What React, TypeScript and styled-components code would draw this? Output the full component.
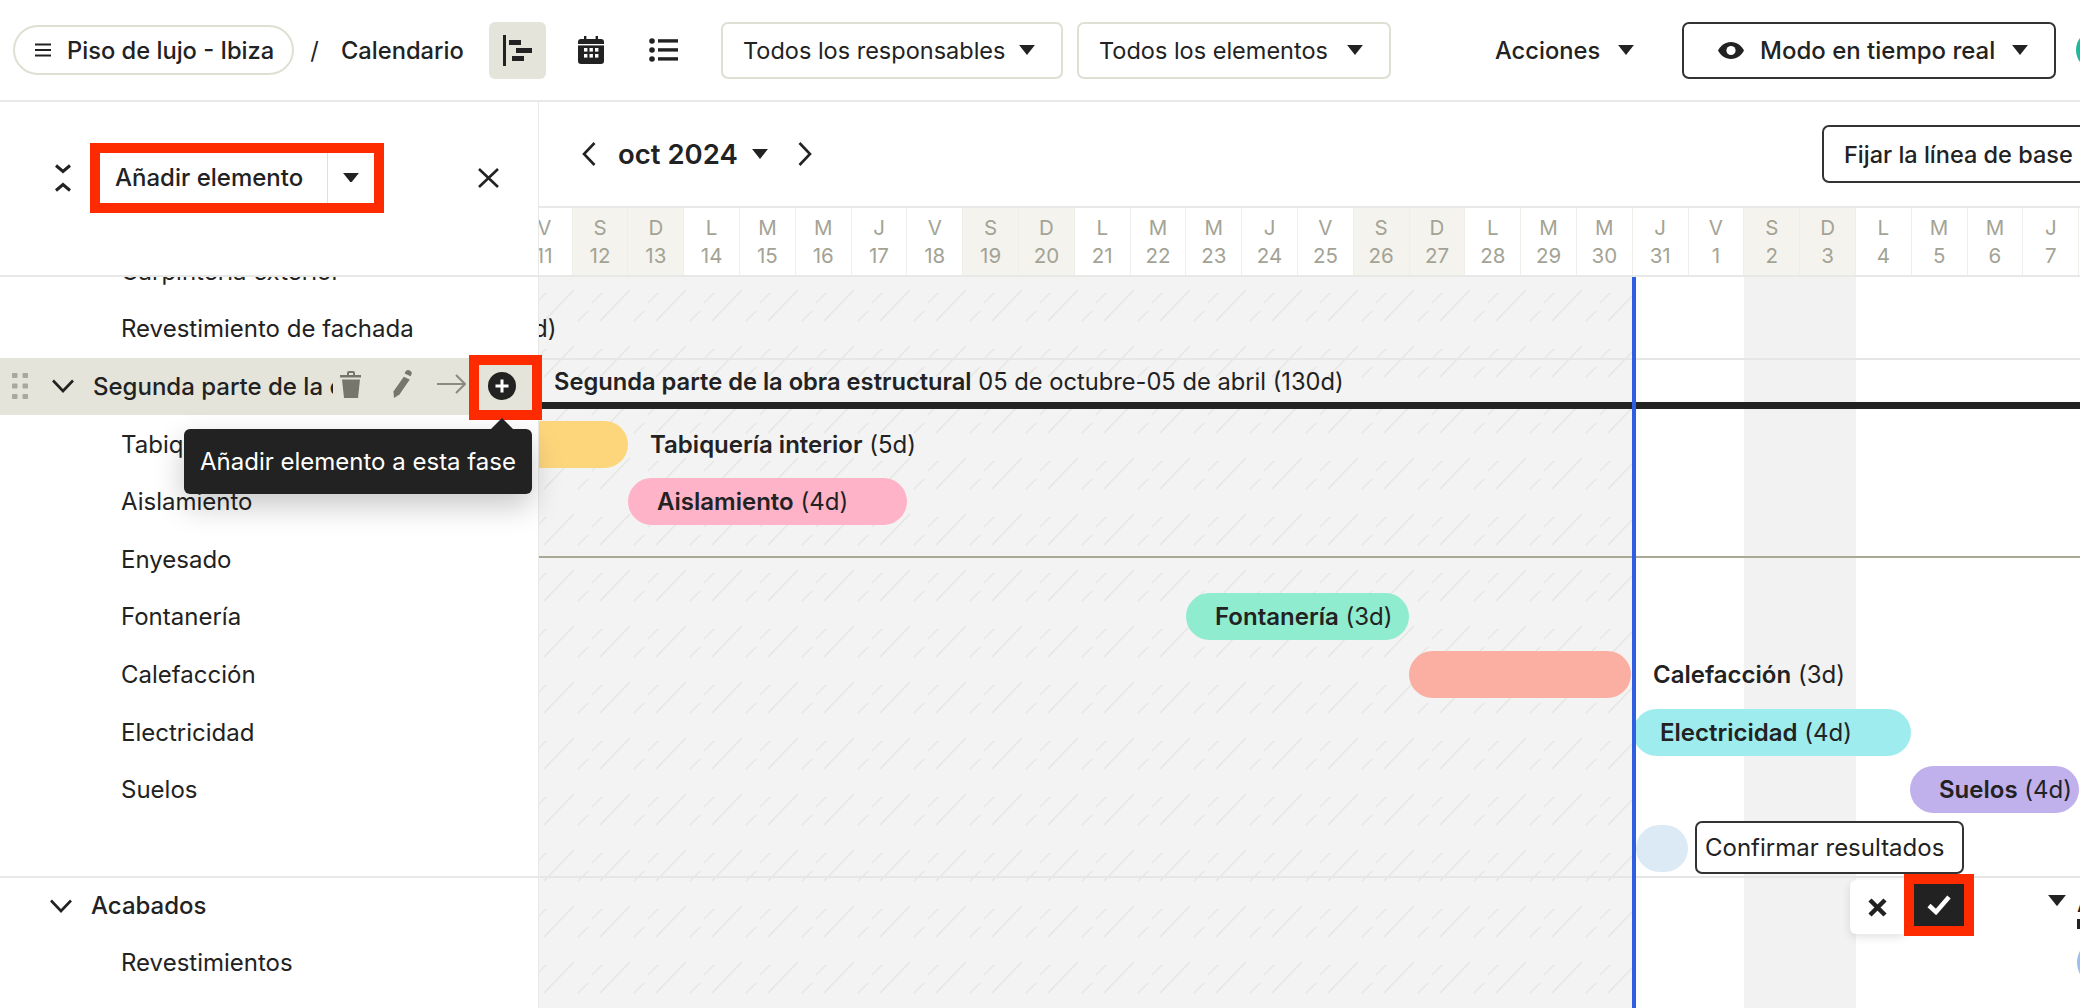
import React from 'react';
import styled, { createGlobalStyle } from 'styled-components';

const INK = '#222222';
const RED = '#ff2b00';
const DAY_W = 55.8;
const ROW_H = 57.6;

const hatch = encodeURIComponent(
  `<svg xmlns="http://www.w3.org/2000/svg" width="56" height="56"><g stroke="#e4e4e2" stroke-width="1.2" fill="none"><path d="M6 44L36 13"/><path d="M40 44L50 34"/><path d="M-2 26L8 16"/><path d="M54 26L64 16"/></g></svg>`,
);

const GlobalStyle = createGlobalStyle`
  html, body {
    margin: 0;
    padding: 0;
    background: #fff;
    font-family: 'Inter', 'Liberation Sans', sans-serif;
    font-size: 24px;
    color: ${INK};
  }
  * { box-sizing: border-box; }
`;

const Page = styled.div`
  width: 2080px;
  height: 1008px;
  overflow: hidden;
  display: flex;
  flex-direction: column;
`;

/* top bar */
const TopBar = styled.header`
  height: 102px;
  flex: none;
  display: flex;
  align-items: center;
  padding: 0 0 0 13px;
  border-bottom: 2px solid #e8e8e6;
  font-size: 23.7px;
  font-weight: 500;
`;
const ProjectPill = styled.div`
  width: 281px;
  height: 50px;
  flex: none;
  display: flex;
  align-items: center;
  gap: 16px;
  padding-left: 20px;
  white-space: nowrap;
  border: 2px solid #e0dfd3;
  border-radius: 25px;
`;
const Slash = styled.span`
  width: 47px;
  flex: none;
  padding-right: 6px;
  text-align: center;
  font-weight: 400;
`;
const Crumb = styled.span`
  width: 148px;
  flex: none;
`;
const ViewButton = styled.div<{ $active?: boolean }>`
  width: 57px;
  height: 57px;
  flex: none;
  margin-right: 16px;
  display: flex;
  align-items: center;
  justify-content: center;
  border-radius: 6px;
  background: ${(p) => (p.$active ? '#e5e4da' : 'transparent')};
`;
const FilterButton = styled.div<{ $w: number; $ml: number; $dark?: boolean }>`
  width: ${(p) => p.$w}px;
  height: 57px;
  flex: none;
  margin-left: ${(p) => p.$ml}px;
  display: flex;
  align-items: center;
  justify-content: space-between;
  padding: 0 26px 0 20px;
  border: 2px solid ${(p) => (p.$dark ? '#333' : '#e0dfd3')};
  border-radius: 7px;
  font-size: ${(p) => (p.$dark ? 24 : 23.5)}px;
  font-weight: ${(p) => (p.$dark ? 500 : 400)};
`;
const ActionsMenu = styled.div`
  width: 139px;
  margin-left: 104px;
  flex: none;
  display: flex;
  align-items: center;
  justify-content: space-between;
`;
const EyeLabel = styled.span`
  display: flex;
  align-items: center;
  gap: 16px;
  margin-left: 14px;
`;
const Avatar = styled.div`
  width: 40px;
  height: 40px;
  flex: none;
  margin-left: 20px;
  border-radius: 50%;
  background: #1fb89a;
`;

/* body */
const Body = styled.div`
  flex: 1;
  display: flex;
  min-height: 0;
`;
const Sidebar = styled.aside`
  width: 539px;
  flex: none;
  position: relative;
  z-index: 3;
  background: #fff;
  border-right: 1px solid #e8e8e6;
`;
const SideHead = styled.div`
  position: relative;
  z-index: 2;
  height: 175px;
  display: flex;
  align-items: center;
  padding-left: 55px;
  padding-bottom: 22px;
  background: #fff;
  border-bottom: 2px solid #e8e8e6;
`;
const AddWrap = styled.div`
  width: 294px;
  height: 70px;
  margin-left: 19px;
  flex: none;
  display: flex;
  align-items: stretch;
  border: 10px solid ${RED};
  font-weight: 500;
`;
const AddLabel = styled.div`
  flex: 1;
  display: flex;
  align-items: center;
  padding-left: 15px;
  white-space: nowrap;
  border-right: 1px solid #e0dfd3;
`;
const AddCaret = styled.div`
  width: 46px;
  flex: none;
  display: flex;
  align-items: center;
  justify-content: center;
`;
const CloseBtn = styled.div`
  margin-left: 94px;
  display: flex;
`;
const TaskList = styled.div`
  margin-top: -34.5px;
`;
const TaskRow = styled.div<{ $rule?: boolean }>`
  height: ${ROW_H}px;
  display: flex;
  align-items: center;
  padding-left: 121px;
  border-top: ${(p) => (p.$rule ? '2px solid #e8e8e6' : 'none')};
`;
const PhaseRow = styled.div<{ $hover?: boolean; $rule?: boolean }>`
  position: relative;
  height: ${ROW_H}px;
  display: flex;
  align-items: center;
  padding-left: ${(p) => (p.$hover ? 12 : 50)}px;
  font-weight: 500;
  background: ${(p) => (p.$hover ? '#e5e4da' : 'transparent')};
  border-top: ${(p) => (p.$rule ? '2px solid #e8e8e6' : 'none')};
`;
const RowChevron = styled.span`
  display: flex;
  flex: none;
  margin-left: 24px;
`;
const PhaseName = styled.span`
  width: 240px;
  flex: none;
  margin-left: 19px;
  white-space: nowrap;
  overflow: hidden;
`;
const RowTools = styled.div`
  display: flex;
  align-items: center;
  margin-top: -4px;
  margin-left: 7px;
`;
const ToolSlot = styled.span<{ $w: number }>`
  width: ${(p) => p.$w}px;
  flex: none;
  display: flex;
  justify-content: center;
`;
const ArrowSlot = styled(ToolSlot)`
  margin-left: -5px;
`;
const PlusMark = styled.div`
  position: absolute;
  left: 469px;
  top: -3px;
  width: 73px;
  height: 65px;
  display: flex;
  align-items: center;
  justify-content: center;
  padding: 0 7px 3px 0;
  border: 10px solid ${RED};
`;
const Tooltip = styled.div`
  position: absolute;
  left: 184px;
  top: 71px;
  width: 348px;
  height: 65px;
  display: flex;
  align-items: center;
  justify-content: center;
  white-space: nowrap;
  background: ${INK};
  color: #fff;
  font-weight: 400;
  border-radius: 6px;
  box-shadow: 0 12px 30px rgba(0, 0, 0, 0.22);
  &::before {
    content: '';
    position: absolute;
    left: 307px;
    top: -11px;
    border-left: 11px solid transparent;
    border-right: 11px solid transparent;
    border-bottom: 11px solid ${INK};
  }
`;

/* chart */
const Chart = styled.main`
  flex: 1;
  min-width: 0;
  margin-left: -1px;
  display: flex;
  flex-direction: column;
`;
const ChartNav = styled.div`
  height: 104px;
  flex: none;
  display: flex;
  align-items: center;
  padding-left: 44px;
`;
const MonthLabel = styled.span`
  margin-left: 22px;
  font-size: 27.5px;
  font-weight: 600;
`;
const NavCaret = styled.span`
  display: flex;
  margin-left: 14px;
`;
const NavNext = styled.span`
  display: flex;
  margin-left: 30px;
`;
const BaselineButton = styled.div`
  width: 300px;
  height: 58px;
  flex: none;
  margin-left: auto;
  margin-right: -43px;
  transform: translateX(-1px);
  display: flex;
  align-items: center;
  padding-left: 20px;
  border: 2px solid #333;
  border-radius: 7px;
  font-size: 23.5px;
  font-weight: 500;
`;
const DayStrip = styled.div`
  height: 71px;
  flex: none;
  display: flex;
  margin-left: -22.2px;
  border-top: 2px solid #e8e8e6;
  border-bottom: 2px solid #e8e8e6;
`;
const DayCell = styled.div<{ $weekend: boolean }>`
  width: ${DAY_W}px;
  flex: none;
  display: flex;
  flex-direction: column;
  align-items: center;
  justify-content: center;
  gap: 3px;
  border-left: 1px solid #efefea;
  background: ${(p) => (p.$weekend ? '#f4f3ee' : '#fff')};
  color: #a3a395;
  font-size: 20.5px;
  line-height: 25px;
`;
const Timeline = styled.div`
  position: relative;
  flex: 1;
  min-height: 0;
`;
const PastShade = styled.div`
  position: absolute;
  left: 0;
  top: 0;
  bottom: 0;
  width: 1094px;
  background-color: #f3f3f3;
  background-image: url("data:image/svg+xml,${hatch}");
`;
const WeekendShade = styled.div`
  position: absolute;
  left: 1206px;
  top: 0;
  bottom: 0;
  width: 112px;
  background: #f2f2f2;
`;
const TodayLine = styled.div`
  position: absolute;
  left: 1094px;
  top: 0;
  bottom: 0;
  width: 4px;
  background: #2f5fe0;
  z-index: 2;
`;
const RowStack = styled.div`
  position: relative;
  margin-top: -34.5px;
`;
const ChartRow = styled.div<{ $start?: number; $rule?: boolean }>`
  position: relative;
  height: ${ROW_H}px;
  display: flex;
  align-items: center;
  padding-left: ${(p) => p.$start ?? 0}px;
  white-space: nowrap;
  box-shadow: ${(p) => (p.$rule ? 'inset 0 2px 0 #e6e6e4' : 'none')};
`;
const Bar = styled.div<{ $w: number; $color: string; $inset?: number }>`
  width: ${(p) => p.$w}px;
  height: 47px;
  flex: none;
  display: flex;
  align-items: center;
  padding-left: ${(p) => p.$inset ?? 0}px;
  border-radius: 23.5px;
  background: ${(p) => p.$color};
`;
/* starts before the visible range, the sidebar covers its left end */
const EarlierBar = styled(Bar)`
  margin-left: -40px;
`;
const BarLabel = styled.span`
  margin-left: 22px;
  flex: none;
`;
const HiddenStartLabel = styled.span`
  flex: none;
  margin-left: -335px;
`;
const StrongName = styled.b`
  font-weight: 600;
`;
const MilestoneBar = styled(Bar)`
  margin-top: 3px;
`;
const PhaseLane = styled.div`
  width: 100%;
  display: flex;
  flex-direction: column;
  align-self: flex-start;
  padding-top: 9px;
`;
const PhaseTitle = styled.div`
  height: 30px;
  padding-left: 16px;
  font-size: 23.7px;
  line-height: 30px;
`;
const PhaseLine = styled.div`
  height: 7px;
  margin-top: 5px;
  background: ${INK};
`;
const DependencyRule = styled.div`
  width: 100%;
  height: 2px;
  margin-bottom: 4px;
  background: #aaa995;
`;
const NameInput = styled.div`
  width: 269px;
  height: 53px;
  flex: none;
  margin-left: 7px;
  display: flex;
  align-items: center;
  padding-left: 8px;
  background: #fff;
  border: 2px solid #333;
  border-radius: 7px;
`;
const ConfirmGroup = styled.div`
  position: absolute;
  left: 1312px;
  top: -2px;
  z-index: 4;
  display: flex;
  align-items: center;
`;
const CancelButton = styled.div`
  width: 54px;
  height: 54px;
  margin-top: 4px;
  display: flex;
  align-items: center;
  justify-content: center;
  background: #fff;
  border-radius: 6px 0 0 6px;
  box-shadow: 0 3px 10px rgba(0, 0, 0, 0.12);
`;
const ConfirmButton = styled.div`
  width: 70px;
  height: 62px;
  display: flex;
  align-items: center;
  justify-content: center;
  background: ${INK};
  border: 10px solid ${RED};
`;
const NextCaret = styled.span`
  display: flex;
  flex: none;
  margin-top: -8px;
`;
const NextPhase = styled.div`
  width: 300px;
  flex: none;
  margin-left: 11px;
  margin-top: 5px;
  align-self: flex-start;
  padding-top: 9px;
`;
const NextPhaseName = styled.div`
  height: 28px;
  line-height: 28px;
  font-weight: 600;
`;
const NextPhaseLine = styled.div`
  height: 10px;
  margin-top: 1px;
  background: ${INK};
`;

/* icons */
const Caret: React.FC<{ size?: number }> = ({ size = 16 }) => (
  <svg width={size} height={size * 0.62} viewBox="0 0 16 10">
    <path d="M0 0h16L8 10z" fill={INK} />
  </svg>
);
const Chevron: React.FC<{ dir: 'left' | 'right' | 'down' }> = ({ dir }) => {
  if (dir === 'down')
    return (
      <svg width="22" height="14" viewBox="0 0 22 14" fill="none" stroke={INK} strokeWidth="2.6">
        <path d="M1 1.5l10 10.5L21 1.5" />
      </svg>
    );
  return (
    <svg width="14" height="24" viewBox="0 0 14 24" fill="none" stroke={INK} strokeWidth="2.6">
      <path d={dir === 'left' ? 'M12.5 1L2 12l10.5 11' : 'M1.5 1L12 12 1.5 23'} />
    </svg>
  );
};
const MenuIcon = () => (
  <svg width="16" height="14" viewBox="0 0 16 14" fill={INK}>
    <rect y="0.5" width="16" height="2" />
    <rect y="6" width="16" height="2" />
    <rect y="11.500" width="16" height="2" />
  </svg>
);
const GanttIcon = () => (
  <svg width="30" height="31" viewBox="0 0 30 31" fill={INK}>
    <rect x="0" y="0" width="3" height="31" />
    <rect x="6" y="5" width="12" height="5" />
    <rect x="13" y="13" width="16" height="5" />
    <rect x="9" y="21" width="12" height="5" />
  </svg>
);
const CalendarIcon = () => (
  <svg width="26" height="28" viewBox="0 0 26 28">
    <path
      fill={INK}
      d="M6 0h2.4v3h9.2V0H20v3h3a3 3 0 0 1 3 3v19a3 3 0 0 1-3 3H3a3 3 0 0 1-3-3V6a3 3 0 0 1 3-3h3z"
    />
    <rect y="8" width="26" height="1.4" fill="#fff" />
    <g fill="#fff">
      {[6, 11.5, 17].map((x) =>
        [12, 18].map((y) => <rect key={`${x}-${y}`} x={x} y={y} width="3.4" height="3.6" />),
      )}
    </g>
  </svg>
);
const ListIcon = () => (
  <svg width="29" height="24" viewBox="0 0 29 24" fill={INK}>
    <circle cx="3" cy="3" r="2.8" />
    <circle cx="3" cy="12" r="2.8" />
    <circle cx="3" cy="21" r="2.8" />
    <rect x="9" y="1.2" width="20" height="3.4" />
    <rect x="9" y="10.2" width="20" height="3.4" />
    <rect x="9" y="19.2" width="20" height="3.4" />
  </svg>
);
const EyeIcon = () => (
  <svg width="26" height="17" viewBox="0 0 26 17">
    <path fill={INK} d="M13 0c6 0 10.600 4 13 8.500C23.600 13 19 17 13 17S2.400 13 0 8.500C2.400 4 7 0 13 0z" />
    <circle cx="13" cy="8.500" r="4.600" fill="#fff" />
  </svg>
);
const CollapseIcon = () => (
  <svg width="16" height="28" viewBox="0 0 16 28" fill="none" stroke={INK} strokeWidth="3">
    <path d="M1 1.500l7 6 7-6" />
    <path d="M1 26.500l7-6 7 6" />
  </svg>
);
const CloseIcon = () => (
  <svg width="21" height="20" viewBox="0 0 21 20" fill="none" stroke={INK} strokeWidth="2.6">
    <path d="M1 1l19 18M20 1L1 19" />
  </svg>
);
const DragDots = () => (
  <svg width="16" height="26" viewBox="0 0 16 26" fill="#a9a89d">
    {[0, 10.500].map((x) =>
      [0, 10.500, 21].map((y) => <rect key={`${x}-${y}`} x={x} y={y} width="5.500" height="5" rx="1" />),
    )}
  </svg>
);
const TrashIcon = () => (
  <svg width="22" height="27" viewBox="0 0 22 27" fill="#77766d">
    <path d="M7 4V2a2 2 0 0 1 2-2h4a2 2 0 0 1 2 2v2h6v2.500H0V4zm2 0h4V2H9z" />
    <path d="M2 8.500h18L18 27H4z" />
  </svg>
);
const PencilIcon = () => (
  <svg width="19" height="28" viewBox="0 0 19 28" fill="#77766d">
    <path d="M12.500 1.500a3 3 0 0 1 3.700-1.200l.8.400a3 3 0 0 1 1.400 3.900l-.8 1.700-6-2.800z" />
    <path d="M10.800 6.800l6 2.800L6.500 24.500 1 28l-.6-6.500z" />
  </svg>
);
const ArrowIcon = () => (
  <svg width="29" height="20" viewBox="0 0 29 20" fill="none" stroke="#8b8a7e" strokeWidth="2">
    <path d="M0 10h27.500M19 1l9 9-9 9" />
  </svg>
);
const PlusCircle = () => (
  <svg width="28" height="28" viewBox="0 0 28 28">
    <circle cx="14" cy="14" r="14" fill={INK} />
    <path d="M14 7.500v13M7.500 14h13" stroke="#fff" strokeWidth="3" />
  </svg>
);
const XBold = () => (
  <svg width="19" height="19" viewBox="0 0 19 19" fill="none" stroke={INK} strokeWidth="4.500">
    <path d="M2 2l15 15M17 2L2 17" />
  </svg>
);
const CheckBold = () => (
  <svg width="24" height="20" viewBox="0 0 24 20" fill="none" stroke="#fff" strokeWidth="4.500">
    <path d="M2 10.500l7 6.500L22 2" />
  </svg>
);

const days: [string, number][] = [
  ['V', 11], ['S', 12], ['D', 13], ['L', 14], ['M', 15], ['M', 16], ['J', 17], ['V', 18],
  ['S', 19], ['D', 20], ['L', 21], ['M', 22], ['M', 23], ['J', 24], ['V', 25], ['S', 26],
  ['D', 27], ['L', 28], ['M', 29], ['M', 30], ['J', 31], ['V', 1], ['S', 2], ['D', 3],
  ['L', 4], ['M', 5], ['M', 6], ['J', 7], ['V', 8],
];

export default function App() {
  return (
    <Page>
      <GlobalStyle />
      <TopBar>
        <ProjectPill>
          <MenuIcon />
          Piso de lujo - Ibiza
        </ProjectPill>
        <Slash>/</Slash>
        <Crumb>Calendario</Crumb>
        <ViewButton $active>
          <GanttIcon />
        </ViewButton>
        <ViewButton>
          <CalendarIcon />
        </ViewButton>
        <ViewButton>
          <ListIcon />
        </ViewButton>
        <FilterButton $w={342} $ml={13}>
          Todos los responsables
          <Caret />
        </FilterButton>
        <FilterButton $w={314} $ml={14}>
          Todos los elementos
          <Caret />
        </FilterButton>
        <ActionsMenu>
          Acciones
          <Caret />
        </ActionsMenu>
        <FilterButton $w={374} $ml={48} $dark>
          <EyeLabel>
            <EyeIcon />
            Modo en tiempo real
          </EyeLabel>
          <Caret />
        </FilterButton>
        <Avatar />
      </TopBar>
      <Body>
        <Sidebar>
          <SideHead>
            <CollapseIcon />
            <AddWrap>
              <AddLabel>Añadir elemento</AddLabel>
              <AddCaret>
                <Caret />
              </AddCaret>
            </AddWrap>
            <CloseBtn>
              <CloseIcon />
            </CloseBtn>
          </SideHead>
          <TaskList>
            <TaskRow>Carpintería exterior</TaskRow>
            <TaskRow>Revestimiento de fachada</TaskRow>
            <PhaseRow $hover>
              <DragDots />
              <RowChevron>
                <Chevron dir="down" />
              </RowChevron>
              <PhaseName>Segunda parte de la obra estructural</PhaseName>
              <RowTools>
                <ToolSlot $w={22}>
                  <TrashIcon />
                </ToolSlot>
                <ToolSlot $w={80}>
                  <PencilIcon />
                </ToolSlot>
                <ArrowSlot $w={29}>
                  <ArrowIcon />
                </ArrowSlot>
              </RowTools>
              <PlusMark>
                <PlusCircle />
              </PlusMark>
              <Tooltip>Añadir elemento a esta fase</Tooltip>
            </PhaseRow>
            <TaskRow>Tabiquería interior</TaskRow>
            <TaskRow>Aislamiento</TaskRow>
            <TaskRow>Enyesado</TaskRow>
            <TaskRow>Fontanería</TaskRow>
            <TaskRow>Calefacción</TaskRow>
            <TaskRow>Electricidad</TaskRow>
            <TaskRow>Suelos</TaskRow>
            <TaskRow />
            <PhaseRow $rule>
              <Chevron dir="down" />
              <PhaseName>Acabados</PhaseName>
            </PhaseRow>
            <TaskRow>Revestimientos</TaskRow>
          </TaskList>
        </Sidebar>
        <Chart>
          <ChartNav>
            <Chevron dir="left" />
            <MonthLabel>oct 2024</MonthLabel>
            <NavCaret>
              <Caret />
            </NavCaret>
            <NavNext>
              <Chevron dir="right" />
            </NavNext>
            <BaselineButton>Fijar la línea de base</BaselineButton>
          </ChartNav>
          <DayStrip>
            {days.map(([letter, num]) => (
              <DayCell key={`${letter}${num}`} $weekend={letter === 'S' || letter === 'D'}>
                <span>{letter}</span>
                <span>{num}</span>
              </DayCell>
            ))}
          </DayStrip>
          <Timeline>
            <PastShade />
            <WeekendShade />
            <TodayLine />
            <RowStack>
              <ChartRow />
              <ChartRow>
                <HiddenStartLabel>
                  <StrongName>Revestimiento de fachada</StrongName> (6d)
                </HiddenStartLabel>
              </ChartRow>
              <ChartRow $rule>
                <PhaseLane>
                  <PhaseTitle>
                    <StrongName>Segunda parte de la obra estructural</StrongName> 05 de octubre-05 de abril (130d)
                  </PhaseTitle>
                  <PhaseLine />
                </PhaseLane>
              </ChartRow>
              <ChartRow>
                <EarlierBar $w={130} $color="#fdd67c" />
                <BarLabel>
                  <StrongName>Tabiquería interior</StrongName> (5d)
                </BarLabel>
              </ChartRow>
              <ChartRow $start={90}>
                <Bar $w={279} $color="#ffb3c8" $inset={29}>
                  <StrongName>Aislamiento</StrongName>&nbsp;(4d)
                </Bar>
              </ChartRow>
              <ChartRow>
                <DependencyRule />
              </ChartRow>
              <ChartRow $start={648}>
                <Bar $w={223} $color="#8fecce" $inset={29}>
                  <StrongName>Fontanería</StrongName>&nbsp;(3d)
                </Bar>
              </ChartRow>
              <ChartRow $start={871}>
                <Bar $w={222} $color="#fbafa3" />
                <BarLabel>
                  <StrongName>Calefacción</StrongName> (3d)
                </BarLabel>
              </ChartRow>
              <ChartRow $start={1095}>
                <Bar $w={278} $color="#9fecef" $inset={27}>
                  <StrongName>Electricidad</StrongName>&nbsp;(4d)
                </Bar>
              </ChartRow>
              <ChartRow $start={1372}>
                <Bar $w={169} $color="#c0b0ec" $inset={29}>
                  <StrongName>Suelos</StrongName>&nbsp;(4d)
                </Bar>
              </ChartRow>
              <ChartRow $start={1098}>
                <MilestoneBar $w={52} $color="#dceaf5" />
                <NameInput>Confirmar resultados</NameInput>
              </ChartRow>
              <ChartRow $rule $start={1510}>
                <NextCaret>
                  <Caret size={18} />
                </NextCaret>
                <NextPhase>
                  <NextPhaseName>Acabados</NextPhaseName>
                  <NextPhaseLine />
                </NextPhase>
                <ConfirmGroup>
                  <CancelButton>
                    <XBold />
                  </CancelButton>
                  <ConfirmButton>
                    <CheckBold />
                  </ConfirmButton>
                </ConfirmGroup>
              </ChartRow>
              <ChartRow $start={1539}>
                <Bar $w={200} $color="#9dbdf0" />
              </ChartRow>
            </RowStack>
          </Timeline>
        </Chart>
      </Body>
    </Page>
  );
}
